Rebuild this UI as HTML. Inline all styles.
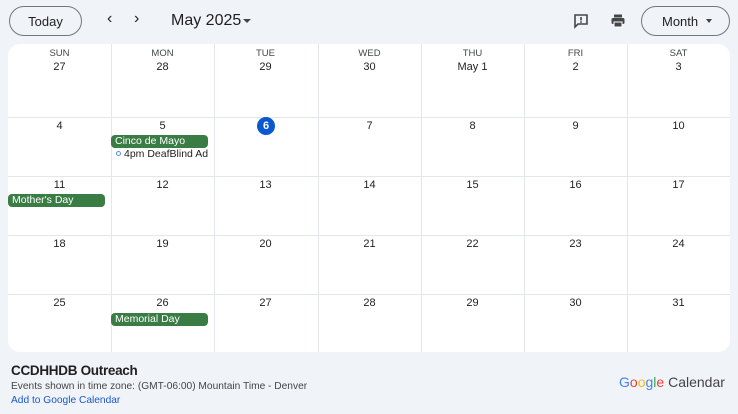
<!DOCTYPE html>
<html><head><style>
*{margin:0;padding:0;box-sizing:border-box}
body{width:738px;height:414px;background:#f0f4f9;font-family:"Liberation Sans",Arial,sans-serif;color:#1f1f1f;position:relative;overflow:hidden}
.abs{position:absolute}
.btn{position:absolute;border:1px solid #747775;border-radius:16px;font-size:13px;display:flex;align-items:center;justify-content:center}
.card{position:absolute;left:8px;top:44px;width:722px;height:308px;background:#fff;border-radius:12px;overflow:hidden}
.vl{position:absolute;top:0;bottom:0;width:1px;background:#e3e6ea}
.hl{position:absolute;left:0;right:0;height:1px;background:#e3e6ea}
.dn{position:absolute;width:103px;text-align:center;font-size:9.5px;color:#444746}
.num{position:absolute;width:103px;text-align:center;font-size:11px;color:#1f1f1f}
.ev{position:absolute;height:13px;background:#3a7d44;border-radius:4px;color:#fff;font-size:10.5px;line-height:13px;padding-left:4px;white-space:nowrap}
</style></head><body>
<div class="btn" style="left:9px;top:6px;width:73px;height:30px">Today</div>
<div class="abs" style="left:107px;top:10px;font-size:16px">&#8249;</div>
<div class="abs" style="left:134px;top:10px;font-size:16px">&#8250;</div>
<div class="abs" style="left:171px;top:12px;font-size:16px">May 2025</div>
<div class="abs" style="left:243px;top:19px;width:0;height:0;border-left:4px solid transparent;border-right:4px solid transparent;border-top:4px solid #444"></div>
<svg class="abs" style="left:573px;top:13px" width="16" height="16" viewBox="0 0 16 16"><path d="M2 2h12v9H5l-3 3z" fill="none" stroke="#444746" stroke-width="1.6"/><rect x="7.2" y="4" width="1.6" height="3.5" fill="#444746"/><rect x="7.2" y="8.3" width="1.6" height="1.5" fill="#444746"/></svg>
<svg class="abs" style="left:610px;top:13px" width="16" height="16" viewBox="0 0 16 16"><rect x="4" y="1.5" width="8" height="3" fill="#444746"/><rect x="1.5" y="5" width="13" height="6" rx="1.5" fill="#444746"/><rect x="4" y="9" width="8" height="5" fill="#444746" stroke="#fff" stroke-width="1"/></svg>
<div class="btn" style="left:641px;top:6px;width:89px;height:30px;justify-content:flex-start;padding-left:20px">Month</div>
<div class="abs" style="left:706px;top:19px;width:0;height:0;border-left:3.5px solid transparent;border-right:3.5px solid transparent;border-top:4px solid #444"></div>
<div class="card">
<div class="vl" style="left:103px"></div><div class="vl" style="left:206px"></div><div class="vl" style="left:310px"></div><div class="vl" style="left:413px"></div><div class="vl" style="left:516px"></div><div class="vl" style="left:619px"></div>
<div class="hl" style="top:73px"></div><div class="hl" style="top:132px"></div><div class="hl" style="top:191px"></div><div class="hl" style="top:250px"></div>
<div class="dn" style="left:0;top:4px">SUN</div><div class="dn" style="left:103px;top:4px">MON</div><div class="dn" style="left:206px;top:4px">TUE</div><div class="dn" style="left:310px;top:4px">WED</div><div class="dn" style="left:413px;top:4px">THU</div><div class="dn" style="left:516px;top:4px">FRI</div><div class="dn" style="left:619px;top:4px">SAT</div>
<div class="num" style="left:0;top:17px">27</div><div class="num" style="left:103px;top:17px">28</div><div class="num" style="left:206px;top:17px">29</div><div class="num" style="left:310px;top:17px">30</div><div class="num" style="left:413px;top:17px">May 1</div><div class="num" style="left:516px;top:17px">2</div><div class="num" style="left:619px;top:17px">3</div>
<div class="num" style="left:0;top:76px">4</div><div class="num" style="left:103px;top:76px">5</div><div class="num" style="left:310px;top:76px">7</div><div class="num" style="left:413px;top:76px">8</div><div class="num" style="left:516px;top:76px">9</div><div class="num" style="left:619px;top:76px">10</div>
<div class="abs" style="left:249px;top:73px;width:18px;height:18px;border-radius:50%;background:#0b57d0;color:#fff;font-size:11px;font-weight:bold;text-align:center;line-height:18px">6</div>
<div class="num" style="left:0;top:135px">11</div><div class="num" style="left:103px;top:135px">12</div><div class="num" style="left:206px;top:135px">13</div><div class="num" style="left:310px;top:135px">14</div><div class="num" style="left:413px;top:135px">15</div><div class="num" style="left:516px;top:135px">16</div><div class="num" style="left:619px;top:135px">17</div>
<div class="num" style="left:0;top:194px">18</div><div class="num" style="left:103px;top:194px">19</div><div class="num" style="left:206px;top:194px">20</div><div class="num" style="left:310px;top:194px">21</div><div class="num" style="left:413px;top:194px">22</div><div class="num" style="left:516px;top:194px">23</div><div class="num" style="left:619px;top:194px">24</div>
<div class="num" style="left:0;top:253px">25</div><div class="num" style="left:103px;top:253px">26</div><div class="num" style="left:206px;top:253px">27</div><div class="num" style="left:310px;top:253px">28</div><div class="num" style="left:413px;top:253px">29</div><div class="num" style="left:516px;top:253px">30</div><div class="num" style="left:619px;top:253px">31</div>
<div class="ev" style="left:103px;top:91px;width:97px">Cinco de Mayo</div>
<div class="abs" style="left:108px;top:104px;font-size:10.5px;white-space:nowrap;width:92px;overflow:hidden"><span style="display:inline-block;width:5px;height:5px;border:1px solid #5a8fd8;border-radius:50%;margin-right:3px;vertical-align:1px"></span>4pm DeafBlind Ad</div>
<div class="ev" style="left:0;top:150px;width:97px">Mother's Day</div>
<div class="ev" style="left:103px;top:269px;width:97px">Memorial Day</div>
</div>
<div class="abs" style="left:11px;top:363px;font-size:13.5px;font-weight:bold;letter-spacing:-0.3px">CCDHHDB Outreach</div>
<div class="abs" style="left:11px;top:381px;font-size:10.2px;color:#444">Events shown in time zone: (GMT-06:00) Mountain Time - Denver</div>
<div class="abs" style="left:11px;top:395px;font-size:10.2px;color:#1a57c8">Add to Google Calendar</div>
<div class="abs" style="left:619px;top:374px;font-size:14px;white-space:nowrap"><span style="color:#4285f4">G</span><span style="color:#ea4335">o</span><span style="color:#fbbc05">o</span><span style="color:#4285f4">g</span><span style="color:#34a853">l</span><span style="color:#ea4335">e</span> <span style="color:#444">Calendar</span></div>
</body></html>
